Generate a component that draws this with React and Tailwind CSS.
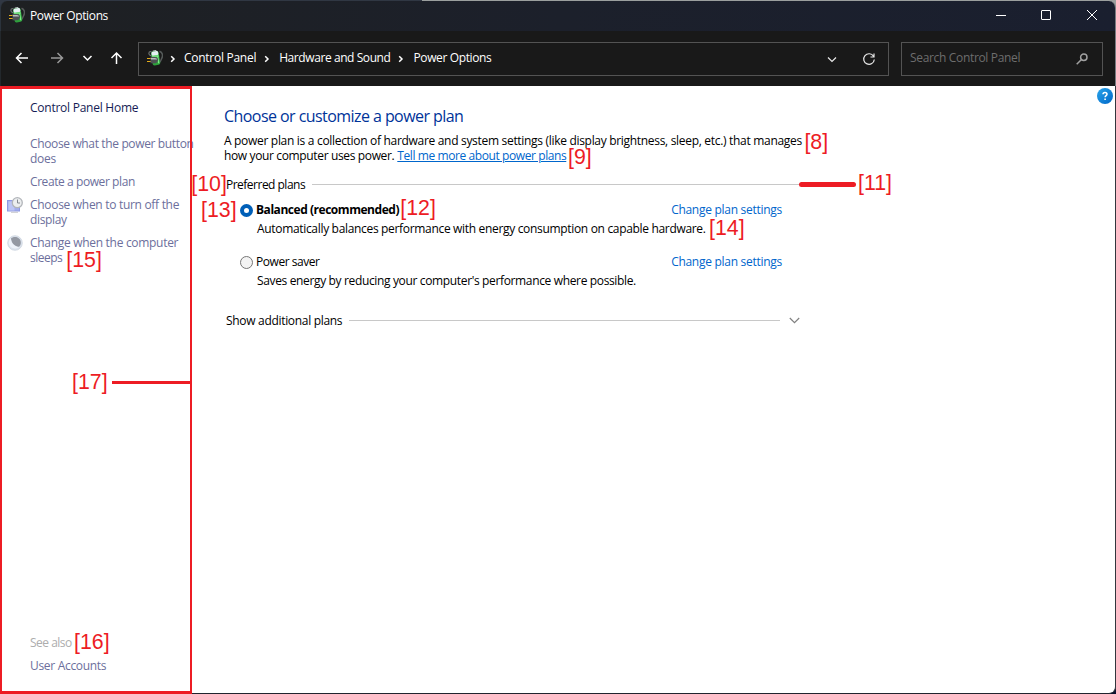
import React from "react";

function PowerIcon({ className = "" }) {
  return (
    <svg className={"shrink-0 " + className} width="16" height="16" viewBox="0 0 16 16" fill="none">
      <path d="M5 6C2.300 5.600 1.200 3.800 2.300 2L4.600 1.200" stroke="#6b706f" strokeWidth="1.200" />
      <path d="M12.500 1.200C16 2.600 16 6 14.600 8.600C14 10.400 13.600 12 12 12.600" stroke="#565b5a" strokeWidth="1.500" />
      <g transform="rotate(-9 8.500 8)">
        <rect x="6.600" y="0.200" width="4" height="2" rx="0.800" fill="#b9c1c0" />
        <rect x="4.700" y="1.200" width="7.800" height="14" rx="2" fill="#2f9f3d" />
        <rect x="5.200" y="1.300" width="6.800" height="4.400" rx="1.600" fill="#e6eff3" />
        <path d="M5.200 5.200h6.800v2H5.200z" fill="#6fdc7a" />
        <path d="M10.200 6.500h1.300v7.200h-1.300z" fill="#7bee86" />
      </g>
      <path d="M0 8.500h4M0 11.500h4" stroke="#e5ad1b" strokeWidth="1" />
      <path d="M3.500 7h4.300c2.200 0 3.200 1.300 3.200 3s-1.300 3.200-3.500 3.200H3.500z" fill="#4d5153" />
      <path d="M4 7.900h3.800c1.400 0 2.200.8 2.300 1.600H4z" fill="#b9bdc0" />
    </svg>
  );
}

function Chevron({ className }) {
  return (
    <svg className={"shrink-0 " + className} width="6" height="8" viewBox="0 0 6 8" fill="none">
      <path d="M1.200 1.200L4 4L1.200 6.800" stroke="#fff" strokeWidth="1.500" />
    </svg>
  );
}

function DisplayTimerIcon() {
  return (
    <svg className="shrink-0" width="16" height="16" viewBox="0 0 16 16" fill="none">
      <rect x="0.500" y="3.500" width="12" height="10.500" fill="#a3aeec" stroke="#8f9ae4" />
      <path d="M1.500 4.500h6v9h-6z" fill="#bcc5f5" />
      <path d="M4 15.300h7" stroke="#c8c8cc" />
      <circle cx="10.300" cy="5.700" r="5" fill="#eceeef" stroke="#b2b5ba" strokeWidth="1.300" />
      <path d="M10.500 2.500v3.500h2.500" stroke="#858a92" />
    </svg>
  );
}

function MoonIcon() {
  return (
    <svg className="shrink-0" width="16" height="16" viewBox="0 0 16 16" fill="none">
      <circle cx="8" cy="8" r="7.300" fill="#dce3ed" stroke="#ced5df" strokeWidth="0.800" />
      <path d="M4 3.400C6 1.400 10.400 1.300 12.600 4C14.600 6.600 14 10 12 11.800C8.500 11.600 4.400 8.600 4 3.400z" fill="#9499a3" />
      <path d="M4 3.200C3.600 7.600 7 11.600 12 12C8.500 15 2.600 13.200 1.800 8.600C1.500 6.200 2.400 4.400 4 3.200z" fill="#eef3fa" />
    </svg>
  );
}

function Note({ className, children }) {
  return (
    <span className={"absolute whitespace-nowrap font-['Liberation_Sans',sans-serif] text-[21.33px] leading-[18px] text-[#ed1c24] " + className}>
      {children}
    </span>
  );
}

function T({ className = "", children }) {
  return <span className={"whitespace-nowrap " + className}>{children}</span>;
}

export default function App() {
  return (
    <div className="relative flex h-[694px] w-[1116px] flex-col overflow-hidden bg-[#0c1330] font-['Open_Sans',sans-serif] text-[12px] leading-[15px] text-black">
      <div className="-mb-[7px] h-[8px] shrink-0 bg-[#9b9f9e]"><div className="h-[8px] w-[422px] bg-[#303743]" /></div>
      <header className="flex h-[30px] shrink-0 items-center rounded-t-[7px] border-l border-r border-l-[#2b333c] border-r-[#777b80] bg-gradient-to-r from-[#1e2022] via-[#1c202b] to-[#1a1f2f] pb-[2px] pl-[8px] text-white">
        <PowerIcon />
        <T className="ml-[5px] tracking-[-0.37px]">Power Options</T>
        <svg className="ml-auto mr-[16px]" width="104" height="12" viewBox="0 0 104 12" fill="none" stroke="#fff">
          <path d="M1 6.500h10" />
          <rect x="46.500" y="1.500" width="9" height="9" rx="0.500" />
          <path d="M92 1l10 10M102 1l-10 10" />
        </svg>
      </header>
      <nav className="flex h-[55px] shrink-0 items-center border-l border-r border-l-[#23282c] border-r-[#777b80] bg-[#191919] pl-[14px] pr-[12px] text-white">
        <svg className="mb-[2px]" width="110" height="16" viewBox="0 0 110 16" fill="none" strokeWidth="1.500">
          <path d="M13 8H2M6.500 3L1.500 8l5 5" stroke="#fff" />
          <path d="M36 8h11M42.500 3l5 5l-5 5" stroke="#999" />
          <path d="M68.500 6l4 4l4-4" stroke="#fff" />
          <path d="M101.500 14V3M96.500 8l5-5l5 5" stroke="#fff" />
        </svg>
        <div className="ml-[13px] flex h-[34px] w-[751px] items-center border border-[#535353] pl-[8px]">
          <PowerIcon className="mb-[2px]" />
          <Chevron className="ml-[7px]" />
          <T className="mb-[2px] ml-[8px] tracking-[-0.27px]">Control Panel</T>
          <Chevron className="ml-[8px]" />
          <T className="mb-[2px] ml-[9px] tracking-[-0.42px]">Hardware and Sound</T>
          <Chevron className="ml-[8px]" />
          <T className="mb-[2px] ml-[9px] tracking-[-0.37px]">Power Options</T>
          <svg className="ml-auto mr-[12px]" width="50" height="14" viewBox="0 0 50 14" fill="none" stroke="#e8e8e8" strokeWidth="1.200">
            <path d="M2 5.500l4 4l4-4" />
            <path d="M47.500 4.200A5.300 5.300 0 1 0 48.300 7.500M48 1.500v3.500h-3.500" />
          </svg>
        </div>
        <div className="ml-[12px] flex h-[34px] w-[202px] items-center justify-between border border-[#535353] pl-[8px] pr-[14px] text-[#6d6d6d]">
          <T className="mb-[2px] tracking-[-0.33px]">Search Control Panel</T>
          <svg width="12" height="12" viewBox="0 0 12 12" fill="none" stroke="#a0a0a0" strokeWidth="1.500">
            <circle cx="7.800" cy="4.200" r="3.200" />
            <path d="M5.500 6.500L0.700 11.300" />
          </svg>
        </div>
      </nav>
      <div className="flex h-[608px] shrink-0 rounded-br-[7px] border-b border-r border-b-[#20242e] border-r-[#33363d] bg-white">
        <aside className="flex w-[192px] flex-col pl-[7px] text-[#6c6f9c]">
          <T className="ml-[23px] mt-[14px] tracking-[-0.25px] text-[#151c55]">Control Panel Home</T>
          <div className="ml-[23px] mt-[21px] flex flex-col">
            <T className="tracking-[-0.36px]">Choose what the power button</T>
            <T className="tracking-[-0.25px]">does</T>
          </div>
          <T className="ml-[23px] mt-[8px] tracking-[-0.42px]">Create a power plan</T>
          <div className="mt-[8px] flex gap-[7px]">
            <DisplayTimerIcon />
            <div className="flex flex-col">
              <T className="tracking-[-0.3px]">Choose when to turn off the</T>
              <T className="tracking-[-0.35px]">display</T>
            </div>
          </div>
          <div className="mt-[8px] flex gap-[7px]">
            <MoonIcon />
            <div className="flex flex-col">
              <T className="tracking-[-0.3px]">Change when the computer</T>
              <T className="tracking-[-0.5px]">sleeps</T>
            </div>
          </div>
          <T className="ml-[23px] mt-auto tracking-[-0.5px] text-[#adadad]">See also</T>
          <T className="mb-[20px] ml-[23px] mt-[8px] tracking-[-0.31px]">User Accounts</T>
        </aside>
        <main className="flex w-[608px] flex-col pl-[32px] pt-[19px]">
          <h1 className="text-[16px] leading-[22px] tracking-[-0.56px] text-[#003399]">Choose or customize a power plan</h1>
          <div className="mt-[6px] flex">
            <T className="tracking-[-0.308px]">A power plan is a collection of hardware and system settings (like display brightness, sleep, etc.) that manages</T>
          </div>
          <div className="flex gap-[3px]">
            <T className="tracking-[-0.36px]">how your computer uses power.</T>
            <T className="tracking-[-0.41px] text-[#0066cc] underline">Tell me more about power plans</T>
          </div>
          <div className="ml-[2px] mt-[14px] flex items-center">
            <T className="tracking-[-0.51px]">Preferred plans</T>
            <div className="ml-[7px] h-px grow bg-[#c8c8c8]" />
          </div>
          <div className="ml-[16px] mt-[10px] flex items-center">
            <span className="mr-[3px] mt-[2px] size-[13px] rounded-full border-[4px] border-[#005fb8] bg-white" />
            <T className="font-bold tracking-[-0.46px]">Balanced (recommended)</T>
            <T className="ml-auto mr-[18px] tracking-[-0.28px] text-[#0066cc]">Change plan settings</T>
          </div>
          <div className="ml-[33px] mt-[4px] flex">
            <T className="tracking-[-0.323px]">Automatically balances performance with energy consumption on capable hardware.</T>
          </div>
          <div className="ml-[16px] mt-[18px] flex items-center">
            <span className="mr-[3px] mt-[2px] size-[13px] rounded-full border border-[#767676] bg-[#f3f3f3]" />
            <T className="tracking-[-0.45px]">Power saver</T>
            <T className="ml-auto mr-[18px] tracking-[-0.28px] text-[#0066cc]">Change plan settings</T>
          </div>
          <div className="ml-[33px] mt-[4px] flex">
            <T className="tracking-[-0.353px]">Saves energy by reducing your computer's performance where possible.</T>
          </div>
          <div className="ml-[2px] mt-[25px] flex items-center">
            <T className="tracking-[-0.31px]">Show additional plans</T>
            <div className="ml-[7px] h-px grow bg-[#c8c8c8]" />
            <svg className="ml-[9px]" width="11" height="7" viewBox="0 0 11 7" fill="none" stroke="#808080" strokeWidth="1.200">
              <path d="M0.800 1l4.700 4.700L10.200 1" />
            </svg>
          </div>
        </main>
        <svg className="ml-auto mr-[2px] mt-[2px]" width="16" height="16" viewBox="0 0 16 16" fill="none">
          <defs>
            <linearGradient id="helpFill" x1="0" y1="0" x2="1" y2="1">
              <stop stopColor="#29a4ea" />
              <stop offset="1" stopColor="#0067c8" />
            </linearGradient>
          </defs>
          <circle cx="8" cy="8" r="8" fill="url(#helpFill)" />
          <path d="M6 6.200C6 3.800 10 3.800 10 6.200C10 7.600 8.100 7.600 8.100 9.300" stroke="#fff" strokeWidth="1.500" />
          <path d="M7.300 10.400h1.600v1.600H7.300z" fill="#fff" />
        </svg>
      </div>

      <div className="pointer-events-none absolute left-0 top-[86px] h-[608px] w-[192px] border-x-2 border-b-[3px] border-t-[3px] border-[#ed1c24]" />
      <div className="absolute left-[112px] top-[381px] h-[3px] w-[78px] bg-[#ed1c24]" />
      <div className="absolute left-[799px] top-[182px] h-[5px] w-[57px] rounded-full bg-[#ed1c24]" />
      <Note className="left-[804.4px] top-[133px]">[8]</Note>
      <Note className="left-[568px] top-[148px]">[9]</Note>
      <Note className="left-[191.3px] top-[175px]">[10]</Note>
      <Note className="left-[858px] top-[174px]">[11]</Note>
      <Note className="left-[400.3px] top-[199px]">[12]</Note>
      <Note className="left-[201px] top-[201px]">[13]</Note>
      <Note className="left-[709px] top-[219px]">[14]</Note>
      <Note className="left-[66.3px] top-[251px]">[15]</Note>
      <Note className="left-[74px] top-[633px]">[16]</Note>
      <Note className="left-[72px] top-[373px]">[17]</Note>
    </div>
  );
}
